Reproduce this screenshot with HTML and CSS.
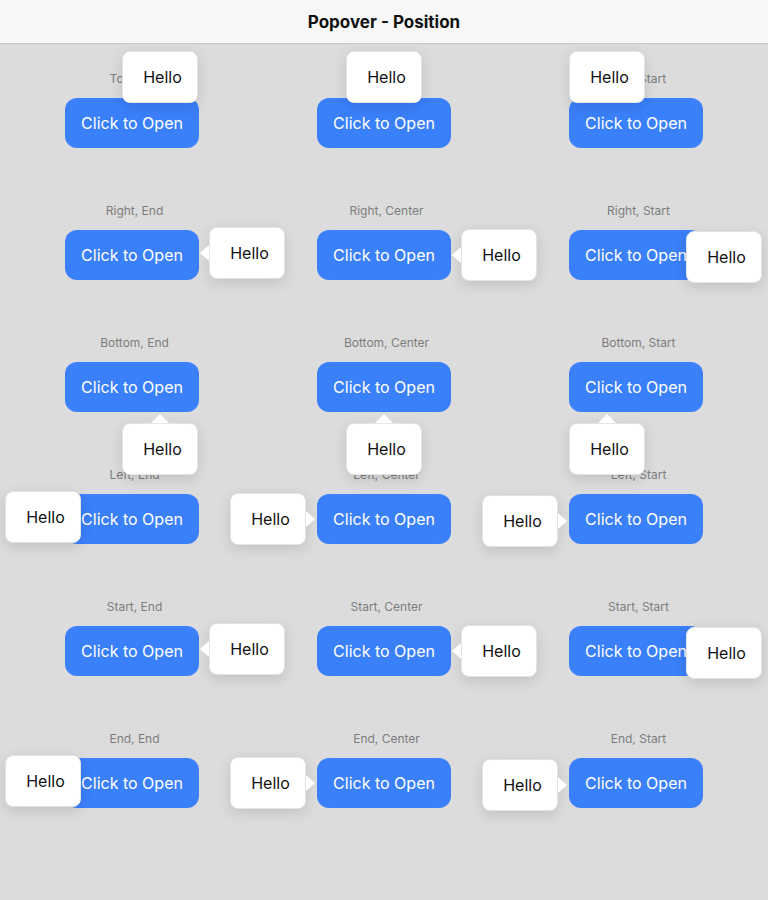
FILE: index.html
```html
<!DOCTYPE html>
<html lang="en">

<head>
    <meta charset="UTF-8">
    <meta name="viewport" content="width=device-width, initial-scale=1.0">
    <title>Popover - Position</title>
    <link rel="stylesheet" href="styles.css">
</head>

<body>
    <header class="toolbar">
        <h1 class="toolbar__title">Popover - Position</h1>
    </header>

    <main class="grid">
        <!-- top -->
        <div class="cell">
            <span class="cell__label">Top, End</span>
            <div class="anchor">
                <button class="open-button">Click to Open</button>
                <div class="popover above end">Hello</div>
            </div>
        </div>
        <div class="cell">
            <span class="cell__label">Top, Center</span>
            <div class="anchor">
                <button class="open-button">Click to Open</button>
                <div class="popover above center">Hello</div>
            </div>
        </div>
        <div class="cell">
            <span class="cell__label">Top, Start</span>
            <div class="anchor">
                <button class="open-button">Click to Open</button>
                <div class="popover above start">Hello</div>
            </div>
        </div>

        <!-- right -->
        <div class="cell">
            <span class="cell__label">Right, End</span>
            <div class="anchor">
                <button class="open-button">Click to Open</button>
                <div class="popover right end">Hello</div>
            </div>
        </div>
        <div class="cell">
            <span class="cell__label">Right, Center</span>
            <div class="anchor">
                <button class="open-button">Click to Open</button>
                <div class="popover right center">Hello</div>
            </div>
        </div>
        <div class="cell">
            <span class="cell__label">Right, Start</span>
            <div class="anchor">
                <button class="open-button">Click to Open</button>
                <div class="popover right start pinned">Hello</div>
            </div>
        </div>

        <!-- bottom -->
        <div class="cell">
            <span class="cell__label">Bottom, End</span>
            <div class="anchor">
                <button class="open-button">Click to Open</button>
                <div class="popover below end">Hello</div>
            </div>
        </div>
        <div class="cell">
            <span class="cell__label">Bottom, Center</span>
            <div class="anchor">
                <button class="open-button">Click to Open</button>
                <div class="popover below center">Hello</div>
            </div>
        </div>
        <div class="cell">
            <span class="cell__label">Bottom, Start</span>
            <div class="anchor">
                <button class="open-button">Click to Open</button>
                <div class="popover below start">Hello</div>
            </div>
        </div>

        <!-- left -->
        <div class="cell">
            <span class="cell__label">Left, End</span>
            <div class="anchor">
                <button class="open-button">Click to Open</button>
                <div class="popover left end pinned">Hello</div>
            </div>
        </div>
        <div class="cell">
            <span class="cell__label">Left, Center</span>
            <div class="anchor">
                <button class="open-button">Click to Open</button>
                <div class="popover left center">Hello</div>
            </div>
        </div>
        <div class="cell">
            <span class="cell__label">Left, Start</span>
            <div class="anchor">
                <button class="open-button">Click to Open</button>
                <div class="popover left start">Hello</div>
            </div>
        </div>

        <!-- start (ltr = right) -->
        <div class="cell">
            <span class="cell__label">Start, End</span>
            <div class="anchor">
                <button class="open-button">Click to Open</button>
                <div class="popover right end">Hello</div>
            </div>
        </div>
        <div class="cell">
            <span class="cell__label">Start, Center</span>
            <div class="anchor">
                <button class="open-button">Click to Open</button>
                <div class="popover right center">Hello</div>
            </div>
        </div>
        <div class="cell">
            <span class="cell__label">Start, Start</span>
            <div class="anchor">
                <button class="open-button">Click to Open</button>
                <div class="popover right start pinned">Hello</div>
            </div>
        </div>

        <!-- end (ltr = left) -->
        <div class="cell">
            <span class="cell__label">End, End</span>
            <div class="anchor">
                <button class="open-button">Click to Open</button>
                <div class="popover left end pinned">Hello</div>
            </div>
        </div>
        <div class="cell">
            <span class="cell__label">End, Center</span>
            <div class="anchor">
                <button class="open-button">Click to Open</button>
                <div class="popover left center">Hello</div>
            </div>
        </div>
        <div class="cell">
            <span class="cell__label">End, Start</span>
            <div class="anchor">
                <button class="open-button">Click to Open</button>
                <div class="popover left start">Hello</div>
            </div>
        </div>
    </main>
</body>

</html>
```

FILE: styles.css
```css
* {
    box-sizing: border-box;
}

body {
    margin: 0;
    min-height: 900px;
    background: #dcdcdc;
    font-family: Inter, "Noto Sans", sans-serif;
}

.toolbar {
    height: 44px;
    display: flex;
    align-items: center;
    justify-content: center;
    background: #f7f7f7;
    border-bottom: 1px solid #c6c6c6;
}

.toolbar__title {
    margin: 0;
    font-size: 17px;
    font-weight: 700;
    color: #111;
}

.grid {
    display: grid;
    grid-template-columns: repeat(3, 1fr);
    row-gap: 53px;
    padding: 25px 6px;
}

.cell {
    display: flex;
    flex-direction: column;
    align-items: center;
}

.cell__label {
    font-size: 12px;
    line-height: 16px;
    color: #7c7c7c;
    padding-top: 2px;
    margin-bottom: 11px;
    padding-left: 5px;
}

.anchor {
    position: relative;
    width: 134px;
    height: 50px;
}

.open-button {
    width: 100%;
    height: 100%;
    border: none;
    border-radius: 12px;
    background: #3a80fb;
    color: #fff;
    font-family: Inter, "Noto Sans", sans-serif;
    font-size: 16px;
    padding: 0;
}

/* popover */
.popover {
    position: absolute;
    z-index: 2;
    width: 76px;
    height: 52px;
    display: flex;
    align-items: center;
    justify-content: center;
    padding-left: 5px;
    background: #fff;
    border: 1px solid #e4e4e4;
    border-radius: 8px;
    box-shadow: 0 4px 14px rgba(0, 0, 0, 0.12);
    font-size: 16px;
    color: #111;
}

.popover::before {
    content: "";
    position: absolute;
    width: 0;
    height: 0;
}

.popover.above {
    top: -47px;
}

.popover.below {
    top: 61px;
}

.popover.above.end,
.popover.below.end {
    left: 57px;
}

.popover.above.center,
.popover.below.center {
    left: 29px;
}

.popover.above.start,
.popover.below.start {
    left: 0;
}

.popover.right {
    left: 144px;
}

.popover.left {
    left: -87px;
}

.popover.right.end,
.popover.left.end {
    top: -3px;
}

.popover.right.center,
.popover.left.center {
    top: -1px;
}

.popover.right.start,
.popover.left.start {
    top: 1px;
}

/* pushed back inside the window */
.popover.right.pinned {
    left: 117px;
}

.popover.left.pinned {
    left: -60px;
}

/* arrows */
.popover.below::before {
    top: -10px;
    left: 50%;
    margin-left: -9px;
    border-left: 9px solid transparent;
    border-right: 9px solid transparent;
    border-bottom: 9px solid #fff;
}

.popover.right::before {
    left: -10px;
    top: 50%;
    margin-top: -8px;
    border-top: 8px solid transparent;
    border-bottom: 8px solid transparent;
    border-right: 9px solid #fff;
}

.popover.left::before {
    right: -10px;
    top: 50%;
    margin-top: -8px;
    border-top: 8px solid transparent;
    border-bottom: 8px solid transparent;
    border-left: 9px solid #fff;
}

.popover.pinned::before {
    display: none;
}
```
